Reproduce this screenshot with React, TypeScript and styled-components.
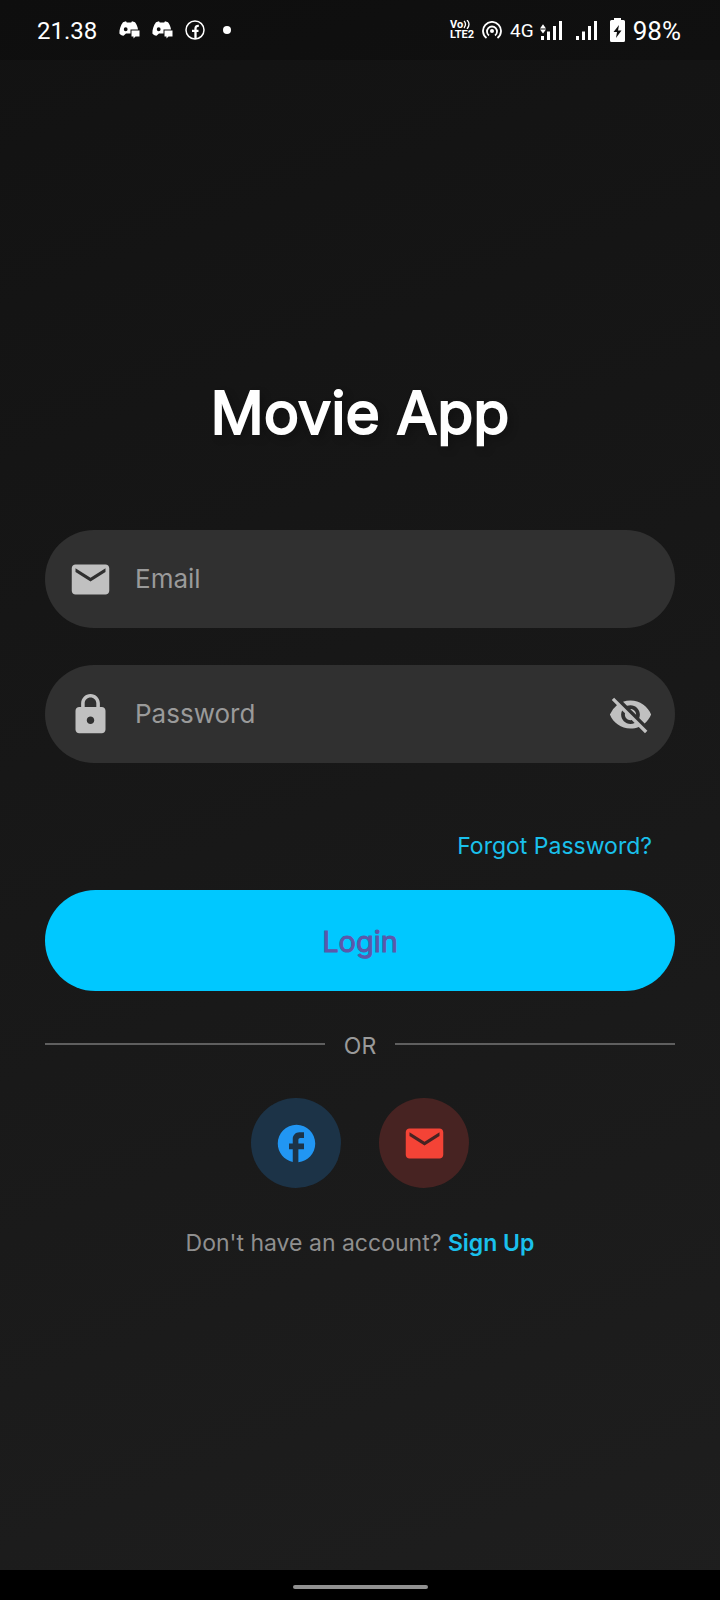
import React, { useState } from "react";
import styled, { createGlobalStyle } from "styled-components";
import { MdEmail, MdFacebook, MdLock, MdVisibility, MdVisibilityOff } from "react-icons/md";

const GlobalStyle = createGlobalStyle`
  * { box-sizing: border-box; }
  body {
    margin: 0;
    background: #000;
    font-family: Inter, Roboto, sans-serif;
  }
  button, input { font-family: inherit; }
`;

const Screen = styled.div`
  min-height: 100vh;
  display: flex;
  flex-direction: column;
  background: linear-gradient(160deg, #121212, #1e1e1e);
`;

const StatusBar = styled.header`
  height: 60px;
  padding: 0 39px 0 37px;
  display: flex;
  align-items: center;
  justify-content: space-between;
  background: rgba(0, 0, 0, 0.2);
  color: #fff;
  font-family: Roboto, sans-serif;
`;

const StatusGroup = styled.div<{ $gap: number }>`
  display: flex;
  align-items: center;
  gap: ${(p) => p.$gap}px;
  svg { display: block; }
`;

const Clock = styled.time`
  margin-right: 10px;
  font-size: 24px;
  line-height: 32px;
  padding-top: 2px;
`;

const Network = styled.span`
  font-size: 19px;
`;

const Battery = styled.span`
  margin-left: 2px;
  font-size: 26px;
  line-height: 32px;
  padding-top: 2px;
`;

const Main = styled.main`
  flex: 1;
  padding: 2px 45px 0;
  display: flex;
  flex-direction: column;
  justify-content: center;
`;

const Title = styled.h1`
  margin: 0 0 77px;
  color: #fff;
  font-size: 59px;
  line-height: 80px;
  font-weight: 400;
  -webkit-text-stroke: 2px #fff;
  text-align: center;
  text-shadow: 4px 4px 8px rgba(0, 0, 0, 0.3);
`;

const Form = styled.form`
  display: flex;
  flex-direction: column;
`;

const Field = styled.label`
  height: 98px;
  margin-bottom: 37px;
  display: flex;
  align-items: center;
  border-radius: 49px;
  background: #303030;
  color: #c0c0c0;
`;

const FieldIcon = styled.span`
  flex: 0 0 90px;
  display: flex;
  justify-content: center;
`;

const TextInput = styled.input`
  flex: 1;
  min-width: 0;
  padding: 0;
  border: 0;
  outline: 0;
  background: none;
  color: #fff;
  font-size: 26px;
  line-height: 36px;
  &::placeholder { color: #9a9a9a; opacity: 1; }
`;

const RevealButton = styled.button`
  flex: 0 0 90px;
  height: 90px;
  padding: 0;
  border: 0;
  background: none;
  color: inherit;
  display: flex;
  align-items: center;
  justify-content: center;
`;

const ForgotLink = styled.a`
  align-self: flex-end;
  margin: 30px 23px 28px 0;
  color: #1ac0ec;
  font-size: 23px;
  line-height: 32px;
  text-decoration: none;
`;

const LoginButton = styled.button`
  height: 101px;
  padding: 2px 0 0;
  border: 0;
  border-radius: 51px;
  background: #00c8ff;
  color: #5c58aa;
  font-size: 29px;
  font-weight: 400;
  -webkit-text-stroke: 1px #5c58aa;
`;

const Divider = styled.div`
  margin: 37px 0 38px;
  display: flex;
  align-items: center;
  gap: 19px;
  color: #9a9a9a;
  font-size: 23px;
  line-height: 28px;
  &::before, &::after {
    content: "";
    flex: 1;
    height: 2px;
    background: #5f5f5f;
  }
`;

const DividerText = styled.span`
  padding-top: 4px;
`;

const SocialRow = styled.div`
  display: flex;
  justify-content: center;
  gap: 38px;
`;

const SocialButton = styled.button<{ $color: string; $fill: string }>`
  width: 90px;
  height: 90px;
  padding: 0;
  border: 0;
  border-radius: 50%;
  display: flex;
  align-items: center;
  justify-content: center;
  color: ${(p) => p.$color};
  background: ${(p) => p.$fill};
`;

const SignUpLine = styled.p`
  margin: 39px 0 0;
  color: #8f8f8f;
  font-size: 23px;
  line-height: 32px;
  text-align: center;
`;

const SignUpLink = styled.a`
  color: #1ac0ec;
  font-weight: 600;
  text-decoration: none;
`;

const NavBar = styled.footer`
  height: 30px;
  display: flex;
  align-items: center;
  justify-content: center;
  background: #000;
`;

const HomeHandle = styled.div`
  width: 135px;
  height: 4px;
  margin-top: 4px;
  border-radius: 2px;
  background: #919191;
`;

const ChatIcon = () => (
  <svg width="21" height="18" viewBox="0 0 21 18" fill="#fff" aria-hidden="true">
    <path
      fillRule="evenodd"
      d="M4 1.200 7 .3l.8 1.200h4.400L13 .3l3 .9c1.800 2.500 2.800 5 3 7.300H11.500V12.500H7L4.500 14.800C2.600 14.500 1.200 13.700.4 12.500.3 8.500 1.500 4.500 4 1.200ZM6.700 6.200a1.900 2 0 1 0 0 4 1.900 2 0 0 0 0-4Z"
    />
    <path d="M12.500 9.500h8v6h-4l-2 2v-2h-2Z" />
  </svg>
);

const FacebookOutline = () => (
  <svg width="20" height="20" viewBox="0 0 20 20" fill="none" stroke="#fff" aria-hidden="true">
    <circle cx="10" cy="10" r="9" strokeWidth="1.500" />
    <path d="M10.500 19v-10.500c0-2 1-2.800 3.300-2.600M7 10.800h6.500" strokeWidth="2.300" />
  </svg>
);

const MoreDot = () => (
  <svg width="14" height="8" viewBox="0 0 14 8" fill="#fff" aria-hidden="true">
    <circle cx="10" cy="4" r="4" />
  </svg>
);

const VolteBadge = styled.span`
  display: flex;
  flex-direction: column;
  font-size: 11px;
  line-height: 10px;
  font-weight: 700;
`;

const VolteTop = styled.span`
  display: flex;
`;

const HotspotIcon = () => (
  <svg width="20" height="18" viewBox="0 0 20 18" fill="none" stroke="#fff" strokeWidth="1.800" aria-hidden="true">
    <circle cx="10" cy="10" r="2" fill="#fff" stroke="none" />
    <path d="M7 14.500a5 5 0 1 1 6 0" />
    <path d="M4.500 17a9 9 0 1 1 11 0" />
  </svg>
);

const SignalIcon = ({ active = false }: { active?: boolean }) => (
  <svg width="29" height="19" viewBox="0 0 29 19" fill="#fff" aria-hidden="true">
    <path d="M1 15h3v4H1zM7 10.500h3V19H7zM13 5h3v14h-3zM19 0h3v19h-3z" />
    {active && <path d="m3 3.300 3 4.200H0zM3 12.500 0 8.500h6z" />}
  </svg>
);

const BatteryIcon = () => (
  <svg width="15" height="24" viewBox="0 0 15 24" aria-hidden="true">
    <path fill="#fff" d="M4 0h7v2h2.500Q15 2 15 3.500v19Q15 24 13.500 24h-12Q0 24 0 22.500v-19Q0 2 1.500 2H4z" />
    <path fill="#0f0f0f" d="M9 7 3.500 14H7l-1 6 5.500-7.500H8z" />
  </svg>
);

export default function App() {
  const [visible, setVisible] = useState(false);

  return (
    <>
      <GlobalStyle />
      <Screen>
        <StatusBar>
          <StatusGroup $gap={12}>
            <Clock>21.38</Clock>
            <ChatIcon />
            <ChatIcon />
            <FacebookOutline />
            <MoreDot />
          </StatusGroup>
          <StatusGroup $gap={6}>
            <StatusGroup $gap={8}>
              <VolteBadge>
                <VolteTop>
                  Vo
                  <svg width="8" height="9" viewBox="0 0 8 9" fill="none" stroke="#fff" strokeWidth="1.300" aria-hidden="true">
                    <path d="M1 1q3 3 0 7M4 0q4 4 0 9" />
                  </svg>
                </VolteTop>
                <span>LTE2</span>
              </VolteBadge>
              <HotspotIcon />
              <Network>4G</Network>
            </StatusGroup>
            <SignalIcon active />
            <SignalIcon />
            <BatteryIcon />
            <Battery>98%</Battery>
          </StatusGroup>
        </StatusBar>
        <Main>
          <Title>Movie App</Title>
          <Form onSubmit={(e) => e.preventDefault()}>
            <Field>
              <FieldIcon><MdEmail size={45} /></FieldIcon>
              <TextInput type="email" placeholder="Email" aria-label="Email" />
            </Field>
            <Field>
              <FieldIcon><MdLock size={45} /></FieldIcon>
              <TextInput type={visible ? "text" : "password"} placeholder="Password" aria-label="Password" />
              <RevealButton
                type="button"
                aria-label={visible ? "Hide password" : "Show password"}
                onClick={() => setVisible(!visible)}
              >
                {visible ? <MdVisibility size={45} /> : <MdVisibilityOff size={45} />}
              </RevealButton>
            </Field>
            <ForgotLink href="#forgot">Forgot Password?</ForgotLink>
            <LoginButton type="submit">Login</LoginButton>
          </Form>
          <Divider><DividerText>OR</DividerText></Divider>
          <SocialRow>
            <SocialButton type="button" aria-label="Continue with Facebook" $color="#2196f3" $fill="#1c3347">
              <MdFacebook size={45} />
            </SocialButton>
            <SocialButton type="button" aria-label="Continue with email" $color="#f44336" $fill="#472322">
              <MdEmail size={45} />
            </SocialButton>
          </SocialRow>
          <SignUpLine>
            Don't have an account? <SignUpLink href="#signup">Sign Up</SignUpLink>
          </SignUpLine>
        </Main>
        <NavBar>
          <HomeHandle />
        </NavBar>
      </Screen>
    </>
  );
}
